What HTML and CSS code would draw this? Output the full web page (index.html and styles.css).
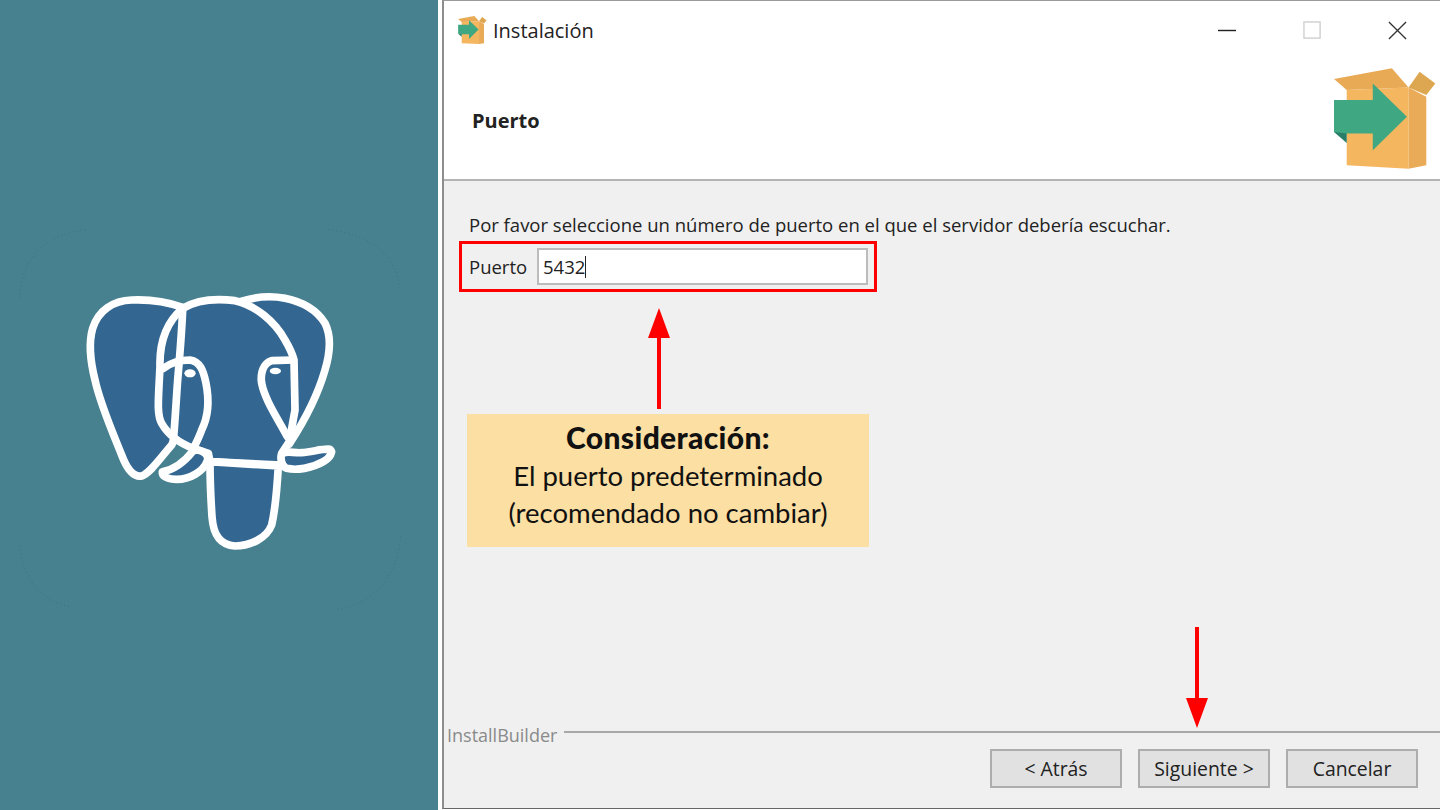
FILE: index.html
```html
<!DOCTYPE html>
<html lang="es">
<head>
    <meta charset="UTF-8">
    <meta name="viewport" content="width=device-width, initial-scale=1.0">
    <title>Instalación - Puerto</title>
    <link rel="stylesheet" href="styles.css">
</head>
<body>
    <svg class="defs" width="0" height="0">
        <symbol id="box-icon" viewBox="420 195 320 320">
            <polygon points="470,270 655,262 655,505 470,495" fill="#f4b65f"/>
            <polygon points="655,262 708,290 708,495 655,505" fill="#eaab58"/>
            <polygon points="432,237 605,205 655,262 470,270" fill="#e8aa55"/>
            <polygon points="655,262 688,215 735,250 708,285" fill="#dda650"/>
            <polygon points="432,395 470,428 470,395" fill="#2a7d68"/>
            <polygon points="432,300 548,300 548,250 650,350 548,450 548,400 470,400 432,395" fill="#3fa882"/>
        </symbol>
    </svg>

    <aside class="side">
        <svg class="elephant" viewBox="0 0 1260 1200" width="420" height="400">
            <g fill="none" stroke="#3a6a78" stroke-width="2" stroke-dasharray="3 9">
                <path d="M58 235C70 110 130 45 260 28"/>
                <path d="M985 28C1110 45 1185 100 1202 210"/>
                <path d="M58 975C70 1080 120 1140 215 1162"/>
                <path d="M1202 950C1190 1070 1130 1145 1010 1170"/>
            </g>
            <g fill="#336791" stroke="#fff" stroke-width="23" stroke-linejoin="round" stroke-linecap="round">
                <path d="M548 262C500 245 440 238 395 240C340 242 295 270 278 325C265 370 270 420 285 480C300 550 335 630 365 705C380 745 400 772 425 768C450 760 480 715 515 675L600 500Z"/>
                <path d="M720 245C760 232 810 226 855 235C905 245 950 270 975 310C995 350 990 400 975 450C955 520 915 600 868 672L800 400Z"/>
                <path d="M480 440C478 370 495 310 548 265C590 240 650 235 705 242C765 255 825 305 855 360C870 385 878 405 882 420L885 570L868 665L845 700L845 735L630 725L625 700L580 685C540 670 505 645 485 610C470 585 475 540 480 440Z"/>
                <path d="M630 725L835 738C832 790 828 860 815 915C800 955 750 978 705 978C660 975 640 945 636 890C632 830 630 780 630 725Z"/>
                <path d="M590 690C610 692 628 705 622 722C610 755 570 778 530 778C505 778 485 770 487 755C520 750 550 730 580 692Z"/>
                <path d="M845 702C860 690 880 700 905 698C940 695 970 685 990 688C1000 695 992 712 970 725C935 745 890 752 860 745C845 740 840 715 845 702Z"/>
                <path fill="none" d="M548 270C545 340 540 400 533 480C528 550 525 610 520 660"/>
                <path fill="none" d="M490 445C510 430 540 420 570 420C600 425 610 450 618 490C628 540 625 590 605 630C598 650 590 665 582 682"/>
                <path fill="none" d="M880 420L815 422C790 430 780 460 785 490C795 540 830 590 862 650"/>
            </g>
            <ellipse cx="570" cy="460" rx="17" ry="12" fill="#fff"/>
            <ellipse cx="826" cy="453" rx="17" ry="10" fill="#fff"/>
        </svg>
    </aside>

    <main class="window">
        <header class="head">
            <div class="titlebar">
                <svg class="title-icon"><use href="#box-icon"/></svg>
                <span class="title">Instalación</span>
                <div class="controls">
                    <svg class="ctrl" viewBox="0 0 20 20"><path d="M0 10H19" stroke="#222" stroke-width="1.5"/></svg>
                    <svg class="ctrl" viewBox="0 0 20 20"><rect x="1" y="1" width="17" height="17" fill="none" stroke="#d0d0d0" stroke-width="1.5"/></svg>
                    <svg class="ctrl" viewBox="0 0 20 20"><path d="M1 1L19 19M19 1L1 19" stroke="#333" stroke-width="1.4"/></svg>
                </div>
            </div>
            <div class="banner">
                <h1 class="banner-title">Puerto</h1>
                <svg class="banner-icon"><use href="#box-icon"/></svg>
            </div>
        </header>

        <section class="content">
            <p class="lead">Por favor seleccione un número de puerto en el que el servidor debería escuchar.</p>
            <div class="port-box">
                <label class="port-label" for="port">Puerto</label>
                <div class="port-input" id="port"><span>5432</span><i class="caret"></i></div>
            </div>
            <svg class="arrow-up" viewBox="0 0 24 102" width="24" height="102">
                <path d="M12 0L23 30H14V101H10V30H1Z" fill="#f00"/>
            </svg>
            <div class="note">
                <strong class="note-title">Consideración:</strong><br>
                El puerto predeterminado<br>
                (recomendado no cambiar)
            </div>
        </section>

        <footer class="foot">
            <svg class="arrow-down" viewBox="0 0 24 102" width="24" height="102">
                <path d="M10 0H14V71H23L12 101L1 71H10Z" fill="#f00"/>
            </svg>
            <div class="brand">
                <span class="brand-name">InstallBuilder</span>
                <span class="brand-line"></span>
            </div>
            <div class="buttons">
                <button class="btn">&lt; Atrás</button>
                <button class="btn">Siguiente &gt;</button>
                <button class="btn">Cancelar</button>
            </div>
        </footer>
    </main>
</body>
</html>
```

FILE: styles.css
```css
html, body {
    margin: 0;
    height: 810px;
    overflow: hidden;
}
body {
    display: flex;
    background: #fff;
    font-family: "Open Sans", "Noto Sans", sans-serif;
    color: #222;
}
.defs {
    position: absolute;
}

.side {
    width: 438px;
    height: 810px;
    flex: none;
    background: #47808f;
}
.elephant {
    display: block;
    margin-top: 220px;
}

.window {
    width: 998px;
    margin-left: 4px;
    height: 809px;
    display: flex;
    flex-direction: column;
    border-top: 1px solid #9a9a9a;
    border-left: 2px solid #8e8e8e;
    border-bottom: 1px solid #666;
    background: #f0f0f0;
    box-sizing: border-box;
}

.head {
    height: 180px;
    flex: none;
    box-sizing: border-box;
    background: #fff;
    border-bottom: 2px solid #b4b4b4;
}
.titlebar {
    display: flex;
    align-items: center;
    height: 58px;
    padding-left: 13px;
}
.title-icon {
    width: 30px;
    height: 30px;
}
.title {
    margin-left: 6px;
    font-size: 20px;
}
.controls {
    margin-left: auto;
    display: flex;
    gap: 66px;
    padding-right: 33px;
}
.ctrl {
    width: 19px;
    height: 19px;
}
.banner {
    display: flex;
    align-items: center;
    justify-content: space-between;
    height: 120px;
    padding-left: 28px;
    padding-right: 3px;
}
.banner-title {
    margin: 2px 0 0;
    font-size: 20px;
    font-weight: 700;
}
.banner-icon {
    width: 107px;
    height: 107px;
    margin-top: -2px;
}

.content {
    flex: 1;
    padding: 31px 0 0 15px;
}
.lead {
    margin: 0 0 0 10px;
    font-size: 18.5px;
    line-height: 26px;
    white-space: nowrap;
}
.port-box {
    display: flex;
    align-items: center;
    width: 418px;
    height: 51px;
    box-sizing: border-box;
    margin: 3px 0 0 0;
    border: 3px solid #f00;
    padding-left: 7px;
}
.port-label {
    font-size: 18.5px;
    width: 68px;
}
.port-input {
    width: 331px;
    height: 37px;
    box-sizing: border-box;
    display: flex;
    align-items: center;
    background: #fff;
    border: 2px solid #bcbcbc;
    padding-left: 4px;
    font-size: 18.5px;
}
.caret {
    width: 1px;
    height: 22px;
    background: #222;
}
.arrow-up {
    display: block;
    margin: 16px 0 4px 188px;
}
.note {
    width: 402px;
    height: 133px;
    box-sizing: border-box;
    margin-left: 8px;
    padding-top: 6px;
    background: #fbdfa3;
    color: #111;
    text-align: center;
    font-family: Lato, sans-serif;
    font-size: 27.5px;
    line-height: 37px;
}
.note-title {
    font-size: 30px;
    font-weight: 900;
    letter-spacing: 0.35px;
    line-height: 1;
}

.foot {
    position: relative;
    height: 86px;
    flex: none;
}
.arrow-down {
    position: absolute;
    left: 741px;
    top: -95px;
}
.brand {
    display: flex;
    align-items: center;
    margin-top: 2px;
    padding-left: 3px;
    height: 22px;
}
.brand-name {
    color: #8a8a8a;
    font-size: 18px;
}
.brand-line {
    flex: 1;
    height: 2px;
    margin: -6px 0 0 7px;
    background: #a8a8a8;
}
.buttons {
    display: flex;
    justify-content: flex-end;
    gap: 16px;
    padding: 3px 22px 0 0;
}
.btn {
    width: 132px;
    height: 39px;
    background: #e1e1e1;
    border: 2px solid #adadad;
    color: #222;
    font-family: "Open Sans", "Noto Sans", sans-serif;
    font-size: 19.4px;
    padding: 0;
}
```
